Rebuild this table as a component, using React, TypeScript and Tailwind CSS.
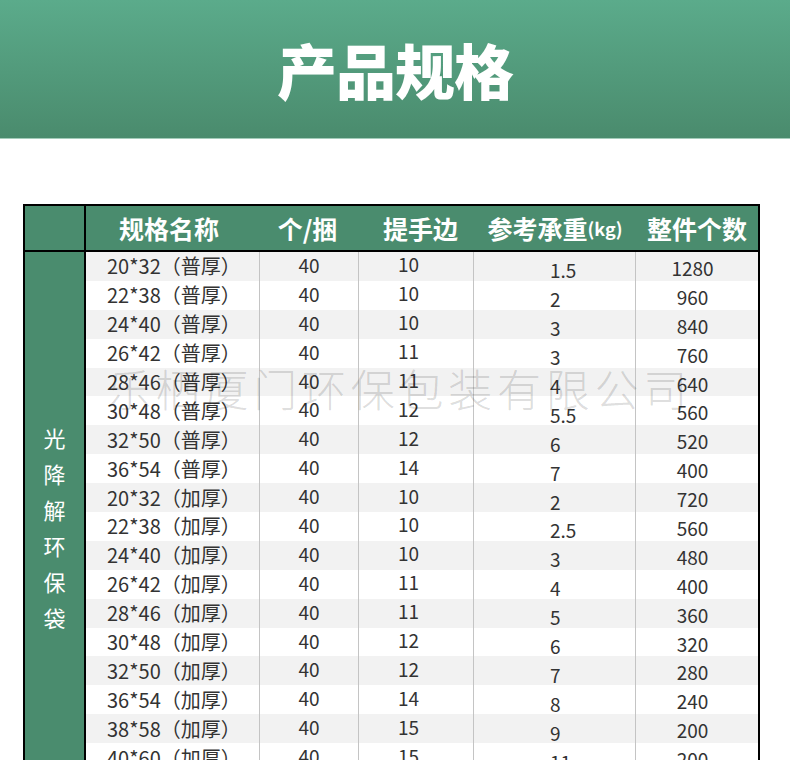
import React from "react";

const rows: [string, string, string, string, string][] = [
  ["20*32（普厚）", "40", "10", "1.5", "1280"],
  ["22*38（普厚）", "40", "10", "2", "960"],
  ["24*40（普厚）", "40", "10", "3", "840"],
  ["26*42（普厚）", "40", "11", "3", "760"],
  ["28*46（普厚）", "40", "11", "4", "640"],
  ["30*48（普厚）", "40", "12", "5.5", "560"],
  ["32*50（普厚）", "40", "12", "6", "520"],
  ["36*54（普厚）", "40", "14", "7", "400"],
  ["20*32（加厚）", "40", "10", "2", "720"],
  ["22*38（加厚）", "40", "10", "2.5", "560"],
  ["24*40（加厚）", "40", "10", "3", "480"],
  ["26*42（加厚）", "40", "11", "4", "400"],
  ["28*46（加厚）", "40", "11", "5", "360"],
  ["30*48（加厚）", "40", "12", "6", "320"],
  ["32*50（加厚）", "40", "12", "7", "280"],
  ["36*54（加厚）", "40", "14", "8", "240"],
  ["38*58（加厚）", "40", "15", "9", "200"],
  ["40*60（加厚）", "40", "15", "11", "200"],
];

export default function App() {
  return (
    <div className="w-[790px] bg-white font-['Noto_Sans_CJK_SC','Noto_Sans',sans-serif] pb-[40px]">
      <div className="h-[139px] bg-gradient-to-b from-[#5bab8b] to-[#4a8b6d] border-b border-[#a3ccba] flex items-center justify-center">
        <h1 className="text-[60px] font-black text-white leading-none tracking-[-1px]">产品规格</h1>
      </div>
      <div className="pt-[65px] pl-[23px]">
        <div className="relative w-[737px] border-2 border-black">
          <div className="flex h-[46px] bg-[#4a8c6e] border-b-2 border-black text-white font-bold text-[25px] leading-none">
            <div className="w-[61px] border-r-2 border-black" />
            <div className="w-[174px] flex items-center justify-center pr-[8px]">规格名称</div>
            <div className="w-[99px] flex items-center justify-center pr-[4px]">个/捆</div>
            <div className="w-[115px] flex items-center justify-center pl-[8px]">提手边</div>
            <div className="w-[162px] flex items-center justify-center">
              参考承重<span className="text-[18px]">(kg)</span>
            </div>
            <div className="flex-1 flex items-center justify-center">整件个数</div>
          </div>
          <div className="flex">
            <div className="w-[61px] border-r-2 border-black bg-[#4a8c6e] text-white text-[22px] leading-[36px] flex flex-col items-center pt-[167px]">
              {"光降解环保袋".split("").map((c) => (
                <div key={c}>{c}</div>
              ))}
            </div>
            <div className="flex-1 flex flex-col text-[19px] text-[#333] leading-none">
              {rows.map((r, i) => (
                <div key={i} className={`flex h-[28.9px] ${i % 2 === 0 ? "bg-[#f2f2f2]" : "bg-white"}`}>
                  <div className="w-[174px] border-r border-[#c4c4c4] flex items-center pl-[21px] text-[20px]">{r[0]}</div>
                  <div className="w-[99px] border-r border-[#c4c4c4] flex items-center justify-center pb-[4px]">{r[1]}</div>
                  <div className="w-[115px] border-r border-[#c4c4c4] flex items-center pl-[39px] pb-[5px]">{r[2]}</div>
                  <div className="w-[162px] border-r border-[#c4c4c4] flex items-center pl-[76px] pt-[7px]">{r[3]}</div>
                  <div className="flex-1 flex items-center justify-center pr-[9px] pt-[2px]">{r[4]}</div>
                </div>
              ))}
            </div>
          </div>
          <div className="absolute left-[82px] top-[160px] text-[44px] leading-none font-light tracking-[4.75px] text-black/15 whitespace-nowrap pointer-events-none">
            乐栖厦门环保包装有限公司
          </div>
        </div>
      </div>
    </div>
  );
}
